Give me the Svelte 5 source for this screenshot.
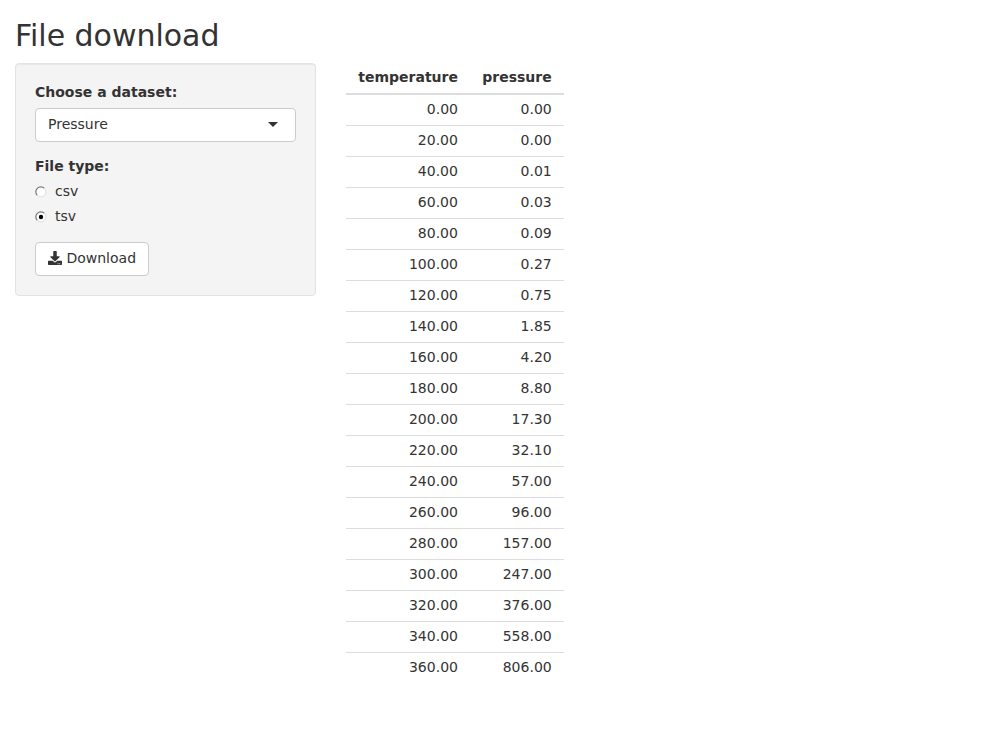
<script>
  const temperatures = Array.from({ length: 19 }, (_, i) => i * 20);
  const pressures = ['0.00', '0.00', '0.01', '0.03', '0.09', '0.27', '0.75', '1.85', '4.20', '8.80',
    '17.30', '32.10', '57.00', '96.00', '157.00', '247.00', '376.00', '558.00', '806.00'];
  let fileType = $state('tsv');
</script>

<div class="container">
  <h2>File download</h2>
  <div class="row">
    <div class="sidebar">
      <form class="well">
        <div class="label">Choose a dataset:</div>
        <div class="select">
          <span>Pressure</span>
          <i class="caret"></i>
        </div>
        <div class="label">File type:</div>
        <div class="radios">
          {#each ['csv', 'tsv'] as type}
            <label class="radio">
              <input type="radio" name="filetype" value={type} bind:group={fileType} />
              <svg width="12" height="12" viewBox="0 0 12 12">
                <circle cx="6" cy="6" r="5" fill="#fff" />
                <path d="M2.300 9.400A5 5 0 0 1 9.400 2.300" fill="none" stroke="#777" stroke-width="1.200" />
                <path d="M2.300 9.400A5 5 0 0 0 9.400 2.300" fill="none" stroke="#dedede" />
                {#if fileType === type}
                  <circle cx="6" cy="6" r="2.200" fill="#000" />
                {/if}
              </svg>
              <span>{type}</span>
            </label>
          {/each}
        </div>
        <button class="btn" type="button">
          <svg width="14" height="14" viewBox="0 0 512 512" fill="currentColor">
            <path d="M216 0h80c13.300 0 24 10.700 24 24v168h87.700c17.800 0 26.700 21.500 14.100 34.100L269.700 378.300c-7.500 7.500-19.800 7.500-27.300 0L90.100 226.100c-12.600-12.600-3.700-34.100 14.100-34.100H192V24c0-13.300 10.700-24 24-24zm296 376v112c0 13.300-10.700 24-24 24H24c-13.300 0-24-10.700-24-24V376c0-13.300 10.700-24 24-24h146.700l49 49c20.100 20.100 52.500 20.100 72.600 0l49-49H488c13.300 0 24 10.700 24 24zm-124 88c0-11-9-20-20-20s-20 9-20 20 9 20 20 20 20-9 20-20zm64 0c0-11-9-20-20-20s-20 9-20 20 9 20 20 20 20-9 20-20z" />
          </svg>
          <span>Download</span>
        </button>
      </form>
    </div>
    <div class="main">
      <table>
        <thead>
          <tr><th>temperature</th><th>pressure</th></tr>
        </thead>
        <tbody>
          {#each temperatures as t, i}
            <tr><td>{t.toFixed(2)}</td><td>{pressures[i]}</td></tr>
          {/each}
        </tbody>
      </table>
    </div>
  </div>
</div>

<style>
  .container {
    box-sizing: border-box;
    padding: 19px 15px 0;
    font: 14px/20px "DejaVu Sans", sans-serif;
    color: #333;
  }
  h2 { margin: 0 0 11px; font-size: 30px; line-height: 33px; font-weight: 400; letter-spacing: -0.03px; }
  .row { display: flex; margin: 0 -15px; }
  .sidebar { box-sizing: border-box; width: 33.3333%; padding: 0 15px; }
  .main { padding: 0 15px; }
  .well {
    margin: 0;
    padding: 18px 19px 19px;
    border: 1px solid #e3e3e3;
    border-radius: 4px;
    background: #f4f4f4;
    box-shadow: inset 0 1px 1px rgba(0, 0, 0, 0.05);
  }
  .label { margin-bottom: 6px; font-weight: 700; }
  .select {
    box-sizing: border-box;
    display: flex;
    align-items: center;
    justify-content: space-between;
    height: 34px;
    margin-bottom: 14px;
    padding: 0 17px 2px 12px;
    border: 1px solid #ccc;
    border-radius: 4px;
    background: #fff;
  }
  .caret { border: 5px solid transparent; border-top-color: #333; border-bottom: 0; margin-top: 1px; }
  .radios { display: flex; flex-direction: column; gap: 5px; margin-bottom: 15px; }
  .radio { display: flex; align-items: center; gap: 8px; height: 20px; }
  .radio input { position: absolute; opacity: 0; margin: 0; }
  .radio span { margin-top: -3px; }
  .btn {
    display: flex;
    align-items: center;
    gap: 4.45px;
    height: 34px;
    padding: 0 11.55px 2px 12px;
    border: 1px solid #ccc;
    border-radius: 4px;
    background: #fff;
    color: #333;
    font: inherit;
  }
  table { border-spacing: 0; border-collapse: separate; }
  th, td { padding: 4px 12px 6px; text-align: right; border-bottom: 1px solid #ddd; }
  th { border-bottom-width: 2px; font-weight: 700; }
  th:first-child, td:first-child { padding-left: 12.6px; }
  tbody tr:last-child td { border-bottom: 0; }
  th:last-child, td:last-child { padding-left: 12.3px; }
</style>
